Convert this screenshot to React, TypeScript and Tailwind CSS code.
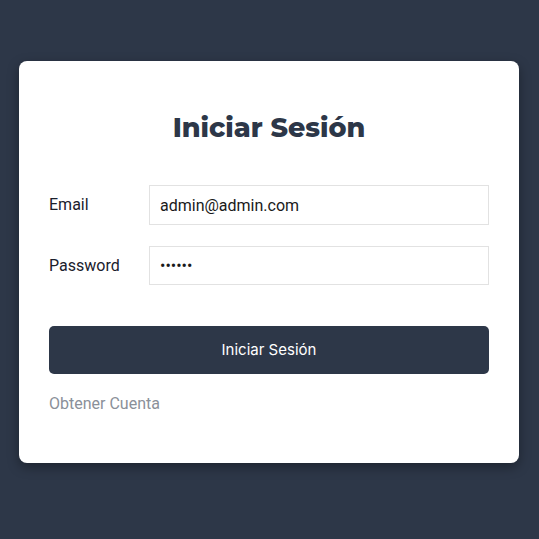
import React, { useState } from "react";

export default function App() {
  const [email, setEmail] = useState("admin@admin.com");
  const [password, setPassword] = useState("123456");

  return (
    <div className="min-h-[539px] w-[539px] bg-[#2d3748] pt-[61px] font-['Roboto',sans-serif]">
      <div className="ml-[19px] w-[500px] rounded-lg bg-white px-[30px] pt-[49px] pb-[47px] shadow-[0_4px_12px_rgba(0,0,0,0.35)]">
        <h1 className="mb-[39px] text-center font-['Montserrat','Inter',sans-serif] text-[27px] leading-[36px] font-extrabold text-[#2d3748]">
          Iniciar Sesión
        </h1>
        <form onSubmit={(e) => e.preventDefault()}>
          <div className="mb-[21px] flex items-center">
            <label className="w-[100px] text-[16px] text-[#1a202c]">Email</label>
            <input
              type="email"
              value={email}
              onChange={(e) => setEmail(e.target.value)}
              className="h-[40px] flex-1 border border-[#e2e2e2] px-[10px] text-[16px] text-[#1a1a1a] outline-none"
            />
          </div>
          <div className="mb-[41px] flex items-center">
            <label className="w-[100px] text-[16px] text-[#1a202c]">Password</label>
            <input
              type="password"
              value={password}
              onChange={(e) => setPassword(e.target.value)}
              className="h-[39px] flex-1 border border-[#e2e2e2] px-[10px] text-[16px] text-[#1a1a1a] outline-none"
            />
          </div>
          <button
            type="submit"
            className="h-[48px] w-full rounded-[5px] bg-[#2d3748] font-['Inter',sans-serif] text-[15px] text-white"
          >
            Iniciar Sesión
          </button>
        </form>
        <a className="mt-[18px] block text-[16px] leading-[24px] text-[#8a9099]" href="#">
          Obtener Cuenta
        </a>
      </div>
    </div>
  );
}
